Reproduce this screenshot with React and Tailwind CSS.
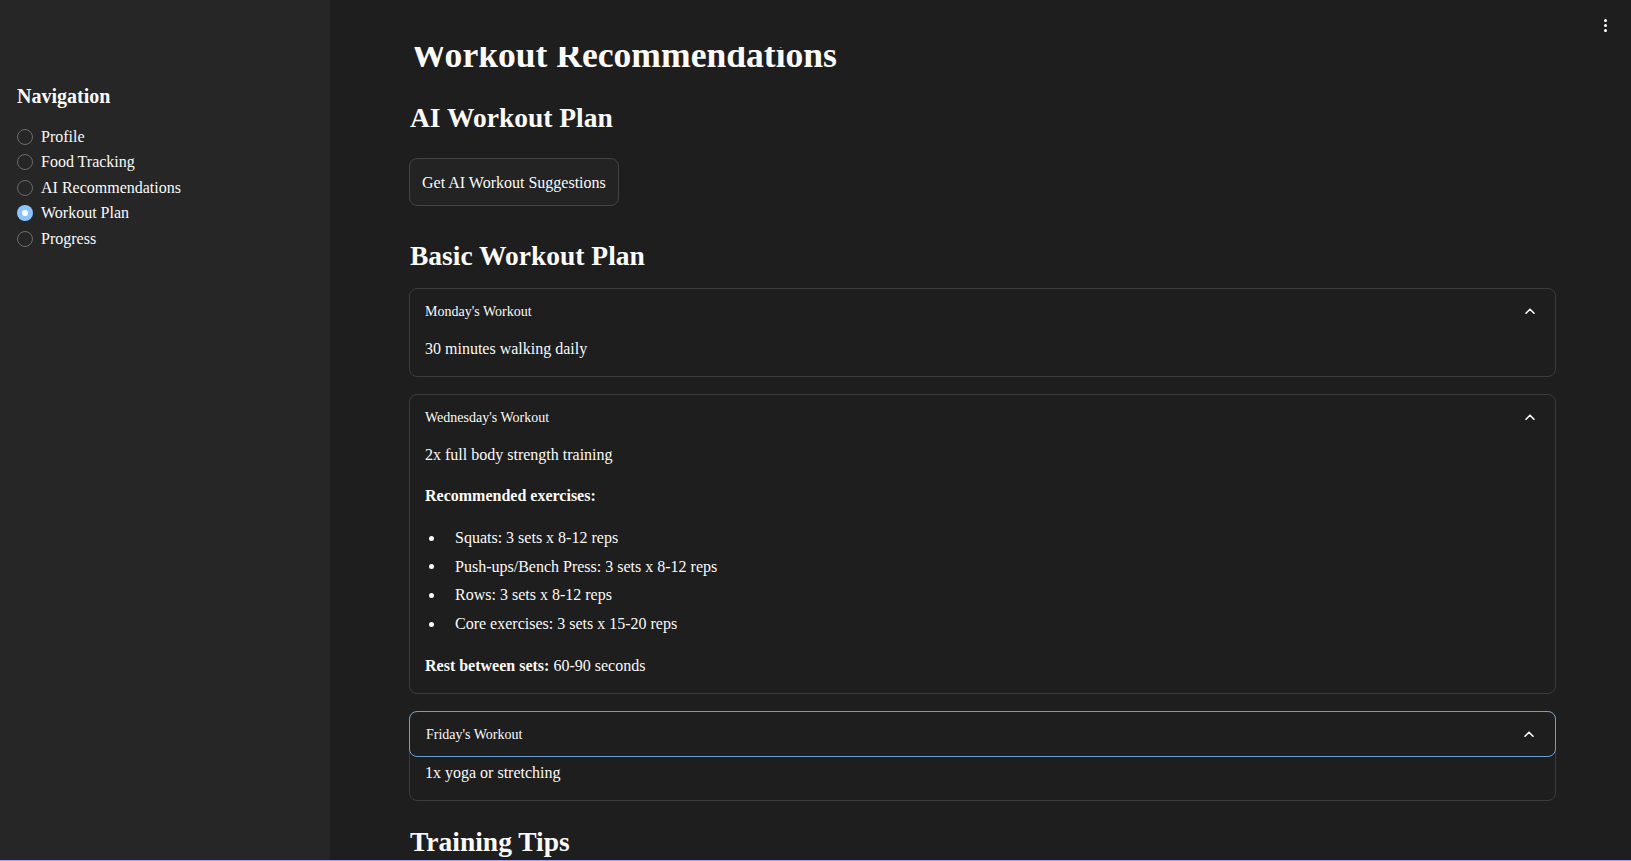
import { useState } from 'react'

const pages = ['Profile', 'Food Tracking', 'AI Recommendations', 'Workout Plan', 'Progress']

const exercises = [
  'Squats: 3 sets x 8-12 reps',
  'Push-ups/Bench Press: 3 sets x 8-12 reps',
  'Rows: 3 sets x 8-12 reps',
  'Core exercises: 3 sets x 15-20 reps',
]

function Chevron() {
  return (
    <svg width="10" height="6" viewBox="0 0 10 6" fill="none">
      <path d="M1 5.2 L5 1.2 L9 5.2" stroke="#fafafa" strokeWidth="1.6" strokeLinecap="round" strokeLinejoin="round" />
    </svg>
  )
}

function Expander({ title, focused, children }) {
  return (
    <div className="rounded-lg border border-[#3b3b3b]">
      <div
        className={
          focused
            ? '-mx-px -mt-px h-[46px] flex items-center justify-between pl-[16px] pr-[21px] rounded-lg border border-[#6c9fd3]'
            : 'h-[44px] flex items-center justify-between pl-[15px] pr-[20px]'
        }
      >
        <span className="text-[14px]">{title}</span>
        <Chevron />
      </div>
      <div className="px-[15px] pt-[4px] pb-[15px] text-[16px] leading-6">{children}</div>
    </div>
  )
}

export default function App() {
  const [page, setPage] = useState('Workout Plan')

  return (
    <div
      className="h-[861px] w-full overflow-hidden flex flex-col bg-[#1e1e1e] text-[#fafafa]"
      style={{ fontFamily: '"Liberation Serif", "Times New Roman", serif' }}
    >
      <div className="flex flex-1 min-h-0">
        <aside className="w-[330px] shrink-0 bg-[#262626] pl-[17px] pt-[84px]">
          <h2 className="text-[20px] leading-6 font-bold">Navigation</h2>
          <div className="mt-[16px] flex flex-col">
            {pages.map((p) => {
              const active = p === page
              return (
                <label
                  key={p}
                  onClick={() => setPage(p)}
                  className="h-[25.5px] flex items-center gap-[8px] text-[16px] leading-6 cursor-pointer"
                >
                  {active ? (
                    <span className="w-[16px] h-[16px] rounded-full bg-[#8cc4ff] flex items-center justify-center">
                      <span className="w-[6px] h-[6px] rounded-full bg-white" />
                    </span>
                  ) : (
                    <span className="w-[16px] h-[16px] rounded-full border-[1.5px] border-[#6a6a6a]" />
                  )}
                  <span>{p}</span>
                </label>
              )
            })}
          </div>
        </aside>

        <main className="relative flex-1 min-w-0 overflow-hidden pl-[79px] pr-[75px]">
          <div className="absolute top-0 left-0 right-0 h-[47px] bg-[#1e1e1e] z-10">
            <div className="absolute right-[24px] top-[19px] flex flex-col gap-[2px]">
              <span className="w-[3px] h-[3px] bg-white rounded-full" />
              <span className="w-[3px] h-[3px] bg-white rounded-full" />
              <span className="w-[3px] h-[3px] bg-white rounded-full" />
            </div>
          </div>

          <div className="pt-[34px]">
            <h1 className="text-[35.6px] leading-[42px] font-bold pl-[2px]">Workout Recommendations</h1>
            <h2 className="mt-[25px] text-[27.5px] leading-[34px] font-bold pl-[1px]">AI Workout Plan</h2>
            <button className="mt-[23px] h-[48px] px-3 pt-px rounded-lg border border-[#444444] bg-[#232323] text-[16px]">
              Get AI Workout Suggestions
            </button>
            <h2 className="mt-[33px] text-[27.5px] leading-[34px] font-bold pl-[1px]">Basic Workout Plan</h2>

            <div className="mt-[15px] flex flex-col gap-[17px]">
              <Expander title="Monday's Workout">
                <p>30 minutes walking daily</p>
              </Expander>
              <Expander title="Wednesday's Workout">
                <p>2x full body strength training</p>
                <p className="mt-[17px] font-bold">Recommended exercises:</p>
                <ul className="mt-[18px] flex flex-col gap-[4.7px]">
                  {exercises.map((e) => (
                    <li key={e} className="flex items-center">
                      <span className="ml-[4px] w-[5px] h-[5px] rounded-full bg-[#fafafa]" />
                      <span className="ml-[21px]">{e}</span>
                    </li>
                  ))}
                </ul>
                <p className="mt-[18px]">
                  <b>Rest between sets:</b> 60-90 seconds
                </p>
              </Expander>
              <Expander title="Friday's Workout" focused>
                <p>1x yoga or stretching</p>
              </Expander>
            </div>

            <h2 className="mt-[24px] text-[27.5px] leading-[34px] font-bold pl-[1px]">Training Tips</h2>
          </div>
        </main>
      </div>
      <div className="h-px shrink-0 bg-[#a59cf8]" />
    </div>
  )
}
